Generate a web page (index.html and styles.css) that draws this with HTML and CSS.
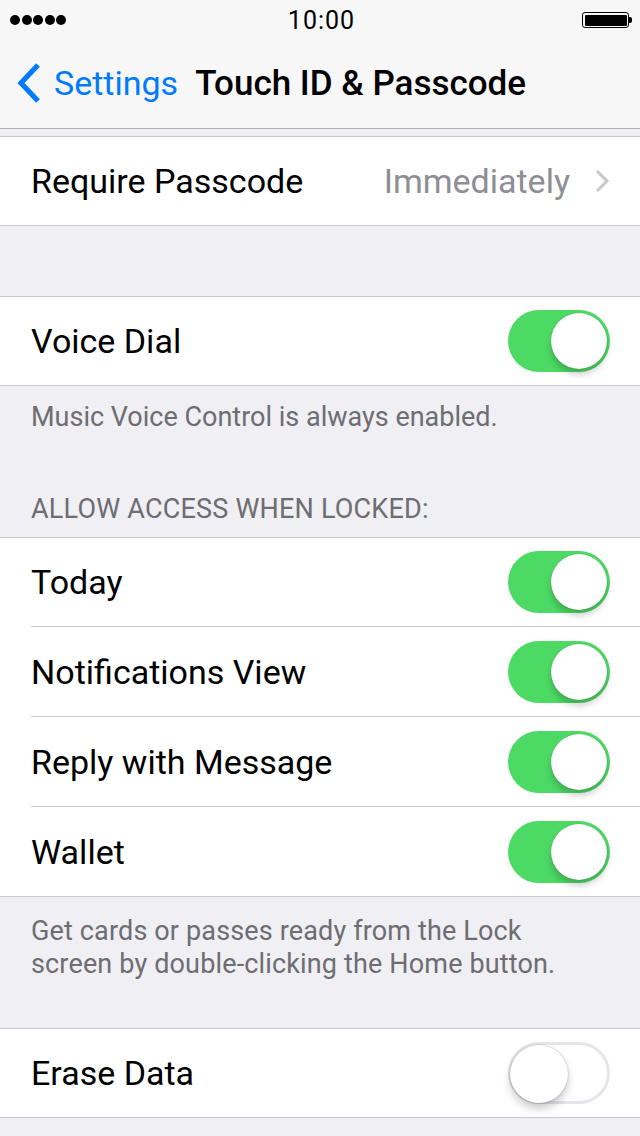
FILE: index.html
```html
<!DOCTYPE html>
<html>
<head>
<meta charset="utf-8">
<link rel="stylesheet" href="styles.css">
</head>
<body>
<div class="screen">
  <div class="status">
    <div class="signal"><i></i><i></i><i></i><i></i><i></i></div>
    <div class="time">10:00</div>
    <div class="battery"><div class="batt-body"><div class="batt-fill"></div></div><div class="batt-tip"></div></div>
  </div>
  <div class="nav">
    <div class="back">
      <svg class="chev" width="28" height="42" viewBox="0 0 28 42"><path d="M23 3 L6 21 L23 39" fill="none" stroke="#007aff" stroke-width="5.2"/></svg>
      <span class="back-text">Settings</span>
    </div>
    <div class="title">Touch ID &amp; Passcode</div>
  </div>

  <div class="gap gap-top"></div>
  <div class="group">
    <div class="row">
      <span class="label">Require Passcode</span>
      <span class="value">Immediately</span>
      <svg class="disc" width="16" height="26" viewBox="0 0 16 26"><path d="M3 3 L13 13 L3 23" fill="none" stroke="#c7c7cc" stroke-width="3"/></svg>
    </div>
  </div>

  <div class="gap gap-mid"></div>
  <div class="group">
    <div class="row">
      <span class="label">Voice Dial</span>
      <span class="switch on"><span class="knob"></span></span>
    </div>
  </div>
  <div class="footer single">Music Voice Control is always enabled.</div>
  <div class="header">ALLOW ACCESS WHEN LOCKED:</div>
  <div class="group">
    <div class="row sep">
      <span class="label">Today</span>
      <span class="switch on"><span class="knob"></span></span>
    </div>
    <div class="row sep">
      <span class="label">Notifications View</span>
      <span class="switch on"><span class="knob"></span></span>
    </div>
    <div class="row sep">
      <span class="label">Reply with Message</span>
      <span class="switch on"><span class="knob"></span></span>
    </div>
    <div class="row last">
      <span class="label">Wallet</span>
      <span class="switch on"><span class="knob"></span></span>
    </div>
  </div>
  <div class="footer double">Get cards or passes ready from the Lock<br>screen by double-clicking the Home button.</div>
  <div class="group">
    <div class="row">
      <span class="label">Erase Data</span>
      <span class="switch off"><span class="knob"></span></span>
    </div>
  </div>
  <div class="gap gap-end"></div>
</div>
</body>
</html>
```

FILE: styles.css
```css
html, body {
  margin: 0;
  padding: 0;
  background: #efeff4;
}
.screen {
  width: 640px;
  height: 1136px;
  overflow: hidden;
  background: #efeff4;
  font-family: Roboto, "Liberation Sans", sans-serif;
  color: #000;
}
.status {
  height: 40px;
  background: #f7f7f7;
  display: flex;
  align-items: center;
  justify-content: space-between;
  padding: 0 8px 0 10px;
  box-sizing: border-box;
  position: relative;
}
.signal {
  display: flex;
  gap: 1.5px;
}
.signal i {
  width: 10px;
  height: 10px;
  border-radius: 50%;
  background: #000;
  display: block;
}
.time {
  position: absolute;
  left: 3px;
  right: 0;
  text-align: center;
  font-size: 25px;
  letter-spacing: 1px;
  top: 6px;
  pointer-events: none;
}
.battery {
  display: flex;
  align-items: center;
}
.batt-body {
  width: 47px;
  height: 16px;
  border: 1.5px solid #000;
  border-radius: 3px;
  padding: 1.5px;
  box-sizing: border-box;
}
.batt-fill {
  width: 100%;
  height: 100%;
  background: #000;
  border-radius: 1px;
}
.batt-tip {
  width: 3px;
  height: 6px;
  background: #000;
  border-radius: 0 2px 2px 0;
}
.nav {
  height: 89px;
  background: #f7f7f7;
  border-bottom: 1px solid #b2b2b2;
  display: flex;
  align-items: center;
  box-sizing: border-box;
  padding-left: 15px;
  padding-bottom: 2px;
}
.back {
  display: flex;
  align-items: center;
  color: #007aff;
}
.chev {
  display: block;
  margin-right: 11px;
}
.back-text {
  font-size: 34px;
}
.title {
  font-size: 35px;
  font-weight: 500;
  margin-left: 17px;
}
.gap-top { height: 7px; }
.gap-mid { height: 70px; }
.group {
  background: #fff;
  border-top: 1px solid #c8c7cc;
  border-bottom: 1px solid #c8c7cc;
}
.row {
  height: 88px;
  display: flex;
  align-items: center;
  margin-left: 31px;
  padding-right: 30px;
  box-sizing: border-box;
}
.row.sep {
  border-bottom: 1px solid #c8c7cc;
  height: 90px;
}
.row.sep:first-child {
  height: 89px;
}
.row.last {
  height: 89px;
}
.label {
  font-size: 34px;
  flex: 1;
}
.value {
  font-size: 34px;
  color: #8e8e93;
  margin-right: 24px;
}
.disc {
  display: block;
}
.switch {
  width: 102px;
  height: 62px;
  border-radius: 31px;
  box-sizing: border-box;
  position: relative;
  display: block;
}
.switch.on {
  background: #4cd964;
}
.switch.off {
  background: #fff;
  border: 3px solid #e5e5ea;
}
.knob {
  position: absolute;
  width: 56px;
  height: 56px;
  border-radius: 50%;
  background: #fff;
  top: 3px;
  right: 3px;
  box-shadow: 0 6px 6px rgba(0,0,0,0.18), 0 0 1px rgba(0,0,0,0.35);
}
.switch.off .knob {
  right: auto;
  left: -1px;
  top: 0;
  width: 58px;
  height: 58px;
  box-shadow: 0 6px 8px rgba(0,0,0,0.2), 0 0 2px rgba(0,0,0,0.3);
}
.footer {
  color: #6d6d72;
  font-size: 27px;
  padding: 0 31px;
  line-height: 33px;
}
.footer.single {
  box-sizing: border-box;
  padding-top: 15px;
  height: 75px;
}
.header {
  color: #6d6d72;
  font-size: 27px;
  letter-spacing: 0.2px;
  padding: 0 31px;
  height: 76px;
  box-sizing: border-box;
  padding-top: 32px;
}
.footer.double {
  padding-top: 18px;
  height: 131px;
  box-sizing: border-box;
  letter-spacing: 0.15px;
}
.gap-end { height: 40px; }
```
